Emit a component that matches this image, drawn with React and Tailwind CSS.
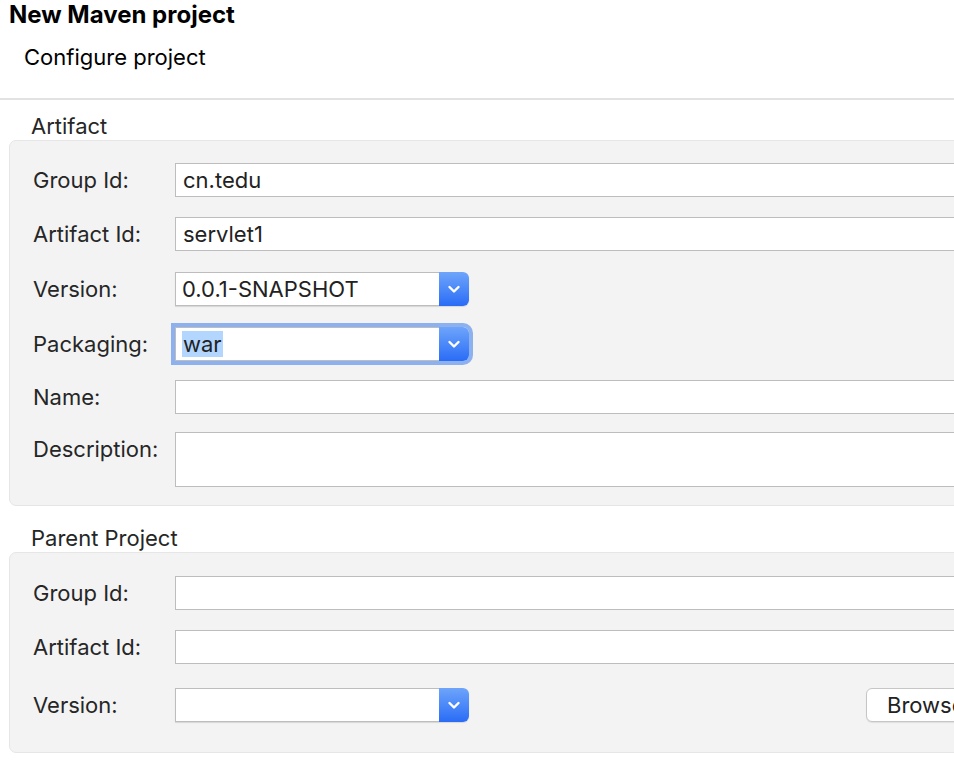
import React from "react";

function Chevron() {
    return (
        <svg width="16" height="16" viewBox="0 0 16 16" className="block">
            <path d="M3.5 6 L8 10.5 L12.5 6" fill="none" stroke="#ffffff" strokeWidth="2.4" strokeLinecap="round" strokeLinejoin="round" />
        </svg>
    );
}

function Label({ children, top }) {
    return (
        <div className={`w-[142px] shrink-0 text-[22px] text-[#262626] ${top ? "self-start mt-[1px]" : ""}`}>
            {children}
        </div>
    );
}

function TextInput({ value, tall }) {
    return (
        <div
            className={`flex-1 bg-white border border-[#bdbdbd] px-[7px] flex items-center text-[22px] text-[#222] ${
                tall ? "h-[55px] items-start" : "h-[34px]"
            }`}
        >
            {value}
        </div>
    );
}

function Select({ value, focused }) {
    return (
        <div
            className={`w-[294px] h-[34px] flex bg-white rounded-r-[6px] ${
                focused ? "shadow-[0_0_0_4px_#8db1ef]" : "shadow-[0_1px_1px_rgba(0,0,0,0.12)]"
            }`}
        >
            <div className="flex-1 border border-r-0 border-[#bdbdbd] flex items-center px-[6px] text-[22px] text-[#222]">
                {focused ? <span className="bg-[#b3d6fe] px-[1px] leading-[26px]">{value}</span> : value}
            </div>
            <div className="w-[30px] rounded-r-[6px] bg-gradient-to-b from-[#6ea4fa] to-[#2a6bf6] flex items-center justify-center">
                <Chevron />
            </div>
        </div>
    );
}

function Row({ label, children, className = "", top }) {
    return (
        <div className={`flex items-center ${className}`}>
            <Label top={top}>{label}</Label>
            {children}
        </div>
    );
}

export default function App() {
    return (
        <div className="w-[954px] h-[780px] overflow-hidden bg-white font-[family-name:Inter,sans-serif] text-[#1e1e1e]">
            <div className="h-[30px] pl-[9px] flex items-center text-[24px] font-bold text-black">
                New Maven project
            </div>
            <div className="h-[30px] mt-[12px] pl-[24px] flex items-center text-[22px] text-black">
                Configure project
            </div>
            <div className="mt-[26px] h-[2px] bg-[#e2e2e2]" />

            <div className="h-[28px] mt-[12px] pl-[31px] flex items-center text-[22px] text-[#262626]">Artifact</div>
            <div className="ml-[9px] w-[1000px] bg-[#f3f3f3] border border-[#e6e6e6] rounded-[7px] pl-[23px] pt-[22px] pb-[18px]">
                <Row label="Group Id:">
                    <TextInput value="cn.tedu" />
                </Row>
                <Row label="Artifact Id:" className="mt-[20px]">
                    <TextInput value="servlet1" />
                </Row>
                <Row label="Version:" className="mt-[21px]">
                    <Select value="0.0.1-SNAPSHOT" />
                </Row>
                <Row label="Packaging:" className="mt-[21px]">
                    <Select value="war" focused />
                </Row>
                <Row label="Name:" className="mt-[19px]">
                    <TextInput value="" />
                </Row>
                <Row label="Description:" className="mt-[18px]" top>
                    <TextInput value="" tall />
                </Row>
            </div>

            <div className="h-[28px] mt-[18px] pl-[31px] flex items-center text-[22px] text-[#262626]">Parent Project</div>
            <div className="ml-[9px] w-[1000px] bg-[#f3f3f3] border border-[#e6e6e6] rounded-[7px] pl-[23px] pt-[23px] pb-[30px]">
                <Row label="Group Id:">
                    <TextInput value="" />
                </Row>
                <Row label="Artifact Id:" className="mt-[20px]">
                    <TextInput value="" />
                </Row>
                <Row label="Version:" className="mt-[24px]">
                    <Select value="" />
                    <div className="ml-[397px] h-[34px] w-[120px] bg-white border border-[#c6c6c6] rounded-[6px] shadow-[0_1px_1px_rgba(0,0,0,0.08)] flex items-center pl-[20px] text-[22px] text-[#222]">
                        Browse...
                    </div>
                </Row>
            </div>
        </div>
    );
}
